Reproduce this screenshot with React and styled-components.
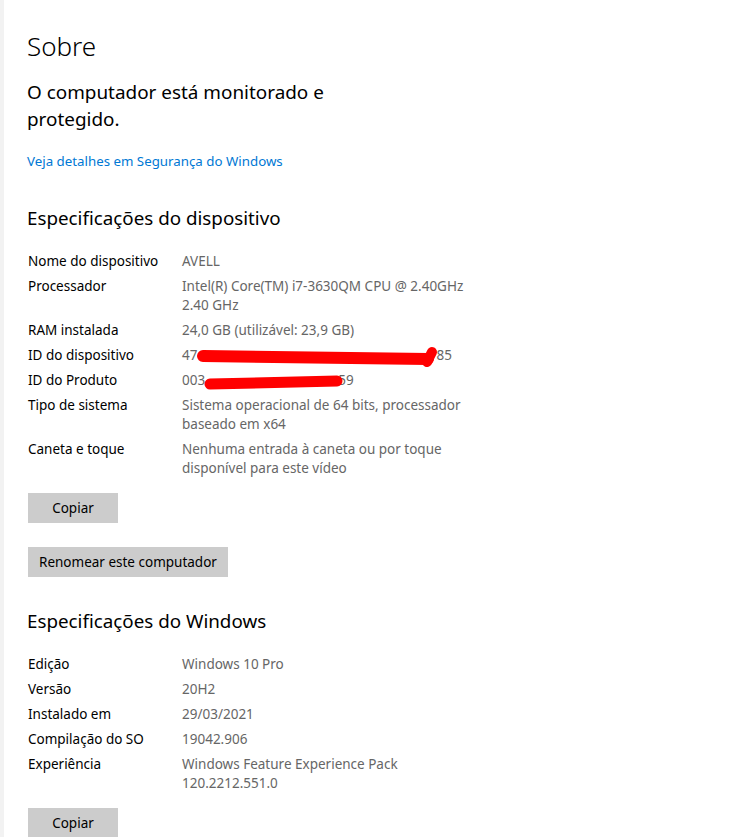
import styled, { createGlobalStyle } from "styled-components";

const GlobalStyle = createGlobalStyle`
  html, body {
    margin: 0;
    padding: 0;
    background: #ffffff;
  }
  body {
    font-family: "Noto Sans", "Open Sans", sans-serif;
    color: #000;
  }
`;

const deviceSpecs = [
  { label: "Nome do dispositivo", lines: ["AVELL"] },
  {
    label: "Processador",
    lines: ["Intel(R) Core(TM) i7-3630QM CPU @ 2.40GHz", "2.40 GHz"],
  },
  { label: "RAM instalada", lines: ["24,0 GB (utilizável: 23,9 GB)"] },
  { label: "ID do dispositivo", redact: "device" },
  { label: "ID do Produto", redact: "product" },
  {
    label: "Tipo de sistema",
    lines: ["Sistema operacional de 64 bits, processador", "baseado em x64"],
  },
  {
    label: "Caneta e toque",
    lines: ["Nenhuma entrada à caneta ou por toque", "disponível para este vídeo"],
  },
];

const windowsSpecs = [
  { label: "Edição", lines: ["Windows 10 Pro"] },
  { label: "Versão", lines: ["20H2"] },
  { label: "Instalado em", lines: ["29/03/2021"] },
  { label: "Compilação do SO", lines: ["19042.906"] },
  {
    label: "Experiência",
    lines: ["Windows Feature Experience Pack", "120.2212.551.0"],
  },
];

// the red marker strokes that hide the ids in the screenshot
const DeviceRedaction = () => (
  <Scribble width="300" height="30" viewBox="0 0 300 30">
    <path
      d="M21 10 L246 13"
      stroke="#ff0000"
      strokeWidth="12"
      strokeLinecap="round"
      fill="none"
    />
    <path
      d="M245 16 L250 6"
      stroke="#ff0000"
      strokeWidth="10"
      strokeLinecap="round"
      fill="none"
    />
  </Scribble>
);

const ProductRedaction = () => (
  <Scribble width="300" height="30" viewBox="0 0 300 30">
    <path
      d="M28 13 L155 10"
      stroke="#ff0000"
      strokeWidth="11"
      strokeLinecap="round"
      fill="none"
    />
  </Scribble>
);

const SpecValue = ({ item }) => {
  if (item.redact === "device") {
    return (
      <Value>
        <Line>
          47
          <Hidden $w={239} />
          85
        </Line>
        <DeviceRedaction />
      </Value>
    );
  }
  if (item.redact === "product") {
    return (
      <Value>
        <Line>
          003
          <Hidden $w={133} />
          59
        </Line>
        <ProductRedaction />
      </Value>
    );
  }
  return (
    <Value>
      {item.lines.map((line) => (
        <Line key={line}>{line}</Line>
      ))}
    </Value>
  );
};

const SpecTable = ({ items }) => (
  <Specs>
    {items.map((item) => (
      <SpecRow key={item.label}>
        <Label>{item.label}</Label>
        <SpecValue item={item} />
      </SpecRow>
    ))}
  </Specs>
);

const App = () => {
  return (
    <Page>
      <GlobalStyle />
      <Title>Sobre</Title>
      <Status>
        O computador está monitorado e
        <br />
        protegido.
      </Status>
      <Link href="#">Veja detalhes em Segurança do Windows</Link>

      <Heading>Especificações do dispositivo</Heading>
      <SpecTable items={deviceSpecs} />
      <Actions>
        <Button>Copiar</Button>
        <Button>Renomear este computador</Button>
      </Actions>

      <Heading $top={30}>Especificações do Windows</Heading>
      <SpecTable items={windowsSpecs} />
      <Actions>
        <Button>Copiar</Button>
      </Actions>
    </Page>
  );
};

export default App;

const Page = styled.div`
  border-left: 4px solid #f2f2f2;
  padding: 27px 24px 20px 23px;
  display: flex;
  flex-direction: column;
  align-items: flex-start;
`;

const Title = styled.h1`
  margin: 0;
  font-size: 26px;
  line-height: 38px;
  font-weight: 300;
`;

const Status = styled.p`
  margin: 14px 0 0;
  font-size: 18.9px;
  line-height: 27px;
  font-weight: 400;
`;

const Link = styled.a`
  margin-top: 19px;
  font-size: 13.3px;
  line-height: 18px;
  color: #0078d4;
  text-decoration: none;
`;

const Heading = styled.h2`
  margin: ${(p) => p.$top || 34}px 0 0;
  font-size: 18.8px;
  line-height: 28px;
  font-weight: 400;
`;

const Specs = styled.div`
  margin-top: 20px;
  padding-left: 1px;
  display: grid;
  row-gap: 6px;
`;

const SpecRow = styled.div`
  display: grid;
  grid-template-columns: 154px 300px;
  font-size: 13.5px;
  line-height: 19px;
`;

const Label = styled.div`
  color: #000;
`;

const Value = styled.div`
  position: relative;
  color: #666666;
`;

const Line = styled.div`
  white-space: nowrap;
`;

const Hidden = styled.span`
  display: inline-block;
  width: ${(p) => p.$w}px;
`;

const Scribble = styled.svg`
  position: absolute;
  left: 0;
  top: 0;
  overflow: visible;
  pointer-events: none;
`;

const Actions = styled.div`
  margin-top: 15px;
  padding-left: 1px;
  display: flex;
  flex-direction: column;
  align-items: flex-start;
  gap: 24px;
`;

const Button = styled.button`
  height: 30px;
  min-width: 90px;
  padding: 0 11px;
  border: none;
  background: #cccccc;
  color: #000;
  font-family: "Noto Sans", "Open Sans", sans-serif;
  font-size: 13.5px;
  cursor: pointer;

  &:hover {
    background: #bdbdbd;
  }
`;
